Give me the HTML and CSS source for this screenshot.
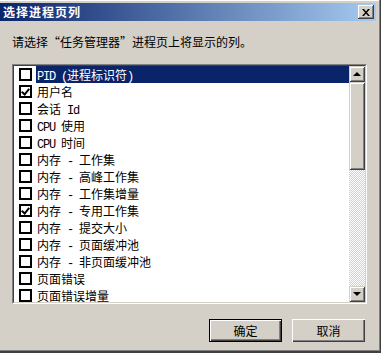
FILE: index.html
```html
<!DOCTYPE html>
<html lang="zh-CN">

<head>
    <meta charset="UTF-8">
    <title>选择进程页列</title>
    <link rel="stylesheet" href="styles.css">
</head>

<body>
    <div class="dialog">
        <div class="titlebar">
            <span class="title">选择进程页列</span>
            <button class="close">
                <svg width="8" height="7" viewBox="0 0 8 7"><path d="M0 0h2l2 2.5 2-2.5h2l-3 3.5 3 3.5h-2l-2-2.5-2 2.5h-2l3-3.5z" fill="#000"/></svg>
            </button>
        </div>

        <div class="content">
            <p class="hint">请选择“任务管理器”进程页上将显示的列。</p>

            <div class="listbox">
                <div class="list-inner">
                    <ul class="items">
                        <li class="selected"><span class="check"></span><span class="label"><span class="en">PID (</span>进程标识符<span class="en">)</span></span></li>
                        <li><span class="check checked"></span><span class="label">用户名</span></li>
                        <li><span class="check"></span><span class="label">会话<span class="en"> Id</span></span></li>
                        <li><span class="check"></span><span class="label"><span class="en">CPU </span>使用</span></li>
                        <li><span class="check"></span><span class="label"><span class="en">CPU </span>时间</span></li>
                        <li><span class="check"></span><span class="label">内存<span class="en"> - </span>工作集</span></li>
                        <li><span class="check"></span><span class="label">内存<span class="en"> - </span>高峰工作集</span></li>
                        <li><span class="check"></span><span class="label">内存<span class="en"> - </span>工作集增量</span></li>
                        <li><span class="check checked"></span><span class="label">内存<span class="en"> - </span>专用工作集</span></li>
                        <li><span class="check"></span><span class="label">内存<span class="en"> - </span>提交大小</span></li>
                        <li><span class="check"></span><span class="label">内存<span class="en"> - </span>页面缓冲池</span></li>
                        <li><span class="check"></span><span class="label">内存<span class="en"> - </span>非页面缓冲池</span></li>
                        <li><span class="check"></span><span class="label">页面错误</span></li>
                        <li><span class="check"></span><span class="label">页面错误增量</span></li>
                    </ul>
                    <div class="scrollbar">
                        <div class="sb-btn"><span class="arrow-up"></span></div>
                        <div class="thumb"></div>
                        <div class="track"></div>
                        <div class="sb-btn"><span class="arrow-down"></span></div>
                    </div>
                </div>
            </div>

            <div class="buttons">
                <button class="btn default">确定</button>
                <button class="btn">取消</button>
            </div>
        </div>
    </div>
</body>

</html>
```

FILE: styles.css
```css
* {
    box-sizing: border-box;
    margin: 0;
    padding: 0;
}

body {
    font-family: "Noto Sans CJK SC", sans-serif;
    font-size: 12px;
    background-color: #D4D0C8;
    color: #000;
    overflow: hidden;
}

.dialog {
    width: 381px;
    height: 353px;
    padding: 3px 4px 0 0;
    border-right: 1px solid #404040;
    border-bottom: 2px solid #404040;
    box-shadow: inset -1px -1px #808080, inset 0 1px #fff;
}

.titlebar {
    height: 18px;
    display: flex;
    justify-content: space-between;
    align-items: center;
    padding: 0 2px 0 3px;
    background: linear-gradient(to right, #0A246A, #A6CAF0);
}

.title {
    color: #fff;
    font-weight: bold;
    letter-spacing: 1px;
    line-height: 18px;
}

.close {
    width: 16px;
    height: 14px;
    border: none;
    background-color: #D4D0C8;
    display: flex;
    align-items: center;
    justify-content: center;
    box-shadow: inset -1px -1px #404040, inset 1px 1px #fff, inset -2px -2px #808080;
}

.content {
    padding: 0 9px 0 12px;
}

.hint {
    margin-top: 14px;
    line-height: 14px;
}

.listbox {
    margin-top: 15px;
    height: 240px;
    border: 1px solid;
    border-color: #808080 #fff #fff #808080;
}

.list-inner {
    height: 100%;
    display: flex;
    border: 1px solid;
    border-color: #404040 #D4D0C8 #D4D0C8 #404040;
    background-color: #fff;
    overflow: hidden;
}

.items {
    flex: 1;
    list-style: none;
}

.items li {
    height: 17px;
    display: flex;
    align-items: center;
    padding-left: 5px;
}

.label {
    flex: 1;
    height: 17px;
    line-height: 17px;
    margin-left: 4px;
    padding-left: 1px;
    white-space: pre;
}

.selected .label {
    background-color: #0A246A;
    color: #fff;
}

.en {
    font-family: "Liberation Mono", monospace;
    letter-spacing: -1.2px;
}

.check {
    width: 13px;
    height: 13px;
    border: 2px solid #000;
    background-color: #fff;
    position: relative;
}

.check.checked::after {
    content: "";
    position: absolute;
    left: 1px;
    top: 0;
    width: 3px;
    height: 6px;
    border-right: 2px solid #000;
    border-bottom: 2px solid #000;
    transform: translate(1px, 0) rotate(40deg);
}

.scrollbar {
    width: 16px;
    display: flex;
    flex-direction: column;
}

.sb-btn,
.thumb {
    background-color: #D4D0C8;
    box-shadow: inset 1px 1px #D4D0C8, inset -1px -1px #404040, inset 2px 2px #fff, inset -2px -2px #808080;
}

.sb-btn {
    height: 16px;
    display: flex;
    align-items: center;
    justify-content: center;
}

.thumb {
    height: 88px;
}

.track {
    flex: 1;
    background-image: repeating-conic-gradient(#fff 0 25%, #D4D0C8 0 50%);
    background-size: 2px 2px;
}

.arrow-up,
.arrow-down {
    width: 0;
    height: 0;
    border-left: 4px solid transparent;
    border-right: 4px solid transparent;
}

.arrow-up {
    border-bottom: 4px solid #000;
}

.arrow-down {
    border-top: 4px solid #000;
}

.buttons {
    display: flex;
    justify-content: flex-end;
    gap: 10px;
    margin-top: 15px;
    margin-right: 2px;
}

.btn {
    width: 73px;
    height: 23px;
    font-family: "Noto Sans CJK SC", sans-serif;
    font-size: 12px;
    background-color: #D4D0C8;
    border: none;
    box-shadow: inset 1px 1px #fff, inset -1px -1px #404040, inset -2px -2px #808080;
}

.btn.default {
    border: 1px solid #000;
}
```
